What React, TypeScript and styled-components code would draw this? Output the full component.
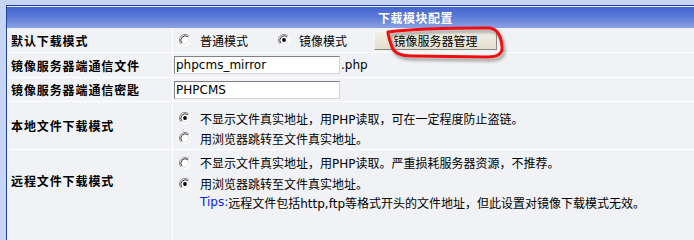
import React from "react";
import styled, { createGlobalStyle } from "styled-components";

const GlobalStyle = createGlobalStyle`
  html, body {
    margin: 0;
    padding: 0;
    background: #c6d5f5;
    overflow: hidden;
  }
  body {
    font-family: "DejaVu Sans", "Noto Sans CJK SC", sans-serif;
    font-size: 12px;
    color: #000;
  }
`;

const Page = styled.div`
  display: flex;
  flex-direction: column;
  height: 100vh;
  min-height: 212px;
  padding: 5px 0 0 6px;
  box-sizing: border-box;
`;

const Frame = styled.div`
  flex: 1;
  display: flex;
  flex-direction: column;
  border-top: 1px solid #23439a;
  border-left: 1px solid #23439a;
  padding-top: 1px;
  background: #dfe7fa;
`;

/* the real table is wider than the window, so the title sits right of centre */
const Header = styled.div`
  height: 21px;
  flex: none;
  display: flex;
  align-items: center;
  justify-content: center;
  padding-left: 130px;
  background: linear-gradient(to bottom, #4465cf 0%, #5a78d6 45%, #8aa2e4 100%);
  color: #fff;
  font-weight: bold;
  font-family: "Noto Sans CJK SC", sans-serif;
  letter-spacing: 0.5px;
`;

const Grid = styled.div`
  flex: 1;
  display: grid;
  grid-template-columns: 165px 1fr;
  grid-template-rows: 24px 24px 23px 47px minmax(62px, 1fr);
  column-gap: 1px;
  row-gap: 1px;
  background: #ffffff;
`;

const Label = styled.div<{ $top?: number }>`
  display: flex;
  align-items: ${(p) => (p.$top != null ? "flex-start" : "center")};
  padding: ${(p) => p.$top ?? 0}px 0 0 4px;
  background: #f0f2f5;
  font-family: "Noto Sans CJK SC", sans-serif;
  font-weight: bold;
  letter-spacing: 0.9px;
  white-space: nowrap;
`;

const Field = styled.div<{ $column?: boolean; $top?: number }>`
  display: flex;
  flex-direction: ${(p) => (p.$column ? "column" : "row")};
  align-items: ${(p) => (p.$column ? "stretch" : "center")};
  padding: ${(p) => p.$top ?? 0}px 0 0 1px;
  background: #f0f2f5;
  white-space: nowrap;
  min-width: 0;
`;

const Option = styled.div<{ $h?: number }>`
  display: flex;
  align-items: center;
  height: ${(p) => p.$h ?? 20}px;
`;

const RadioBox = styled.svg<{ $gap?: number }>`
  width: 12px;
  height: 12px;
  flex: none;
  margin-left: ${(p) => p.$gap ?? 5}px;
  margin-right: 9px;
`;

const TextInput = styled.input`
  box-sizing: border-box;
  width: 166px;
  height: 18px;
  margin: 0;
  padding: 0 1px;
  border: 1px solid;
  border-color: #7f8088 #d4d6dc #d4d6dc #7f8088;
  background: #fff;
  font-family: "DejaVu Sans", sans-serif;
  font-size: 12px;
  color: #000;
  outline: none;
`;

const Suffix = styled.span`
  margin-left: 1px;
`;

const ButtonWrap = styled.span`
  position: relative;
  display: inline-block;
  flex: none;
  margin-left: 27px;
`;

const Button = styled.button`
  width: 123px;
  height: 19px;
  margin: 0;
  padding: 0;
  border: 1px solid;
  border-color: #f7f6f0 #8c8a80 #8c8a80 #f7f6f0;
  background: linear-gradient(to bottom, #f2f0e6, #e4e0d0);
  font-family: "Noto Sans CJK SC", sans-serif;
  font-size: 12px;
  color: #000;
  line-height: 17px;
`;

/* hand-drawn red mark laid over the button */
const Annotation = styled.svg`
  position: absolute;
  z-index: 2;
  left: 8px;
  top: -7px;
  width: 130px;
  height: 42px;
  pointer-events: none;
  overflow: visible;
`;

const Tips = styled.div`
  height: 16px;
  display: flex;
  align-items: center;
  padding-left: 26px;
`;

const TipsKey = styled.span`
  color: #0b24e6;
`;

function Radio({ checked, gap }: { checked?: boolean; gap?: number }) {
  return (
    <RadioBox viewBox="0 0 12 12" $gap={gap}>
      <circle cx="6" cy="6" r="5.5" fill="#ffffff" />
      <path d="M2.1 9.9 A5.5 5.5 0 0 1 9.9 2.1" fill="none" stroke="#8a8a8a" strokeWidth="1" />
      <path d="M2.9 9.1 A4.4 4.4 0 0 1 9.1 2.9" fill="none" stroke="#3c3c3c" strokeWidth="1" />
      <path d="M9.9 2.1 A5.5 5.5 0 0 1 2.1 9.9" fill="none" stroke="#ffffff" strokeWidth="1" />
      <path d="M9.1 2.9 A4.4 4.4 0 0 1 2.9 9.1" fill="none" stroke="#e2e0d8" strokeWidth="1" />
      {checked && <circle cx="6" cy="6" r="1.9" fill="#000" />}
    </RadioBox>
  );
}

export default function App() {
  return (
    <Page>
      <GlobalStyle />
      <Frame>
        <Header>下载模块配置</Header>
        <Grid>
          <Label>默认下载模式</Label>
          <Field>
            <Radio />
            普通模式
            <Radio checked gap={30} />
            镜像模式
            <ButtonWrap>
              <Button type="button">镜像服务器管理</Button>
              <Annotation viewBox="0 0 130 42">
                <defs>
                  <filter id="mark-shadow" x="-10%" y="-20%" width="130%" height="160%">
                    <feDropShadow dx="2" dy="3" stdDeviation="1.4" floodColor="#555" floodOpacity="0.55" />
                  </filter>
                </defs>
                <path
                  d="M6 8 C30 5 80 4 106 4 C115 4 119 12 120 22 C121 30 115 33 106 33 L30 32 C18 32 12 29 10 23 C8 17 6 12 6 8"
                  fill="none"
                  stroke="#f10d0d"
                  strokeWidth="3"
                  strokeLinecap="round"
                  strokeLinejoin="round"
                  filter="url(#mark-shadow)"
                />
              </Annotation>
            </ButtonWrap>
          </Field>

          <Label>镜像服务器端通信文件</Label>
          <Field>
            <TextInput defaultValue="phpcms_mirror" />
            <Suffix>.php</Suffix>
          </Field>

          <Label>镜像服务器端通信密匙</Label>
          <Field>
            <TextInput defaultValue="PHPCMS" />
          </Field>

          <Label>本地文件下载模式</Label>
          <Field $column $top={6}>
            <Option>
              <Radio checked />
              不显示文件真实地址，用PHP读取，可在一定程度防止盗链。
            </Option>
            <Option>
              <Radio />
              用浏览器跳转至文件真实地址。
            </Option>
          </Field>

          <Label $top={22}>远程文件下载模式</Label>
          <Field $column $top={2}>
            <Option $h={21}>
              <Radio />
              不显示文件真实地址，用PHP读取。严重损耗服务器资源，不推荐。
            </Option>
            <Option $h={21}>
              <Radio checked />
              用浏览器跳转至文件真实地址。
            </Option>
            <Tips>
              <TipsKey>Tips:</TipsKey>
              远程文件包括http,ftp等格式开头的文件地址，但此设置对镜像下载模式无效。
            </Tips>
          </Field>
        </Grid>
      </Frame>
    </Page>
  );
}
